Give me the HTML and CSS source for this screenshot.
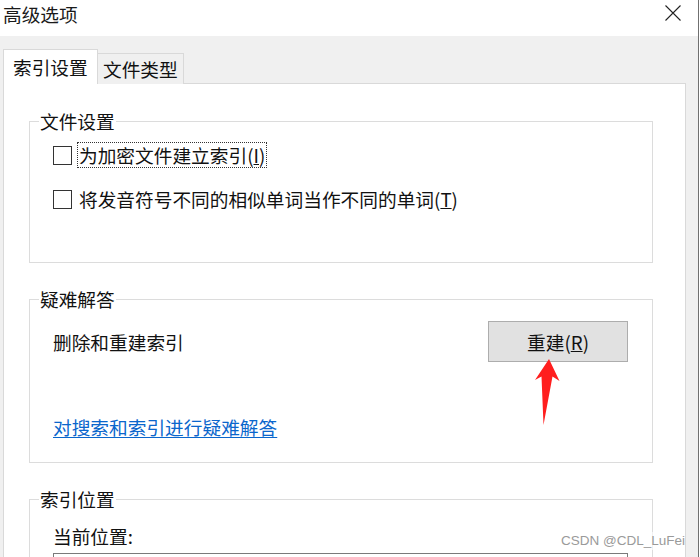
FILE: index.html
```html
<!DOCTYPE html>
<html lang="zh-CN">
<head>
<meta charset="utf-8">
<title>高级选项</title>
<link rel="stylesheet" href="styles.css">
</head>
<body>
<div class="window">
  <div class="titlebar">
    <div class="title">高级选项</div>
    <div class="close">
      <svg width="16" height="16" viewBox="0 0 16 16"><path d="M0.5 0.5 L15.5 15.5 M15.5 0.5 L0.5 15.5" stroke="#222" stroke-width="1.1" fill="none"/></svg>
    </div>
  </div>
  <div class="client">
    <div class="tabs">
      <div class="tab active">索引设置</div>
      <div class="tab">文件类型</div>
    </div>
    <div class="panel">
      <div class="group group-files">
        <span class="legend">文件设置</span>
        <div class="check-row first">
          <span class="checkbox"></span>
          <span class="check-label focused">为加密文件建立索引(<u>I</u>)</span>
        </div>
        <div class="check-row">
          <span class="checkbox"></span>
          <span class="check-label">将发音符号不同的相似单词当作不同的单词(<u>T</u>)</span>
        </div>
      </div>
      <div class="group group-trouble">
        <span class="legend">疑难解答</span>
        <div class="rebuild-row">
          <span class="text">删除和重建索引</span>
          <button class="btn">重建(<u>R</u>)</button>
        </div>
        <a class="link" href="#">对搜索和索引进行疑难解答</a>
        <svg class="arrow" width="40" height="80" viewBox="530 355 40 80"><polygon points="549,360 559.5,382 552.5,377.5 543.5,426 541.5,377.5 535,381" fill="#ff1e1e"/></svg>
      </div>
      <div class="group group-location">
        <span class="legend">索引位置</span>
        <div class="text">当前位置:</div>
        <div class="path-box"></div>
      </div>
    </div>
  </div>
  <div class="watermark">CSDN @CDL_LuFei</div>
</div>
</body>
</html>
```

FILE: styles.css
```css
* { box-sizing: border-box; }
html, body { margin: 0; padding: 0; background: #fff; }
body {
  font-family: "Noto Sans CJK SC", "Microsoft YaHei", sans-serif;
  font-size: 18.7px;
  color: #111;
  width: 700px;
  height: 557px;
  overflow: hidden;
}
.window {
  position: relative;
  width: 699px;
  height: 557px;
  border-right: 1px solid #707070;
  display: flex;
  flex-direction: column;
  overflow: hidden;
}
.titlebar {
  height: 36px;
  flex: none;
  display: flex;
  justify-content: space-between;
  align-items: flex-start;
  background: #fff;
}
.title {
  padding-left: 3px;
  line-height: 28px;
  color: #1a1a1a;
}
.close {
  margin: 5px 17px 0 0;
  width: 16px;
  height: 16px;
}
.close svg { display: block; }
.client {
  flex: 1;
  background: #f0f0f0;
  padding: 13px 12px 0 3px;
  display: flex;
  flex-direction: column;
}
.tabs {
  display: flex;
  align-items: flex-end;
  margin-bottom: -1px;
  position: relative;
  z-index: 1;
}
.tab {
  height: 31px;
  width: 87px;
  margin-left: -1px;
  border: 1px solid #d9d9d9;
  border-bottom: none;
  background: #f0f0f0;
  line-height: 29px;
  padding-left: 5px;
}
.tab.active {
  margin-left: 0;
  width: 95px;
  height: 35px;
  background: #fff;
  padding-left: 9px;
  line-height: 34px;
  position: relative;
  z-index: 2;
}
.panel {
  flex: 1;
  background: #fff;
  border: 1px solid #d9d9d9;
  padding: 37px 32px 0 25px;
}
.group {
  position: relative;
  border: 1px solid #dcdcdc;
  padding-left: 23px;
}
.legend {
  position: absolute;
  top: -13px;
  left: 9px;
  padding: 0 1px;
  background: #fff;
  line-height: 24px;
}
.group-files {
  height: 142px;
  padding-top: 20px;
}
.check-row {
  display: flex;
  align-items: center;
  height: 26px;
  margin-top: 18px;
}
.check-row.first { margin-top: 0; }
.checkbox {
  width: 19px;
  height: 19px;
  border: 1px solid #333;
  background: #fff;
  flex: none;
}
.check-label {
  margin-left: 5px;
  padding: 0 1px;
  line-height: 24px;
  border: 1px solid transparent;
}
.check-label.focused { border: 1px dotted #333; }
.group-trouble {
  margin-top: 36px;
  height: 164px;
  padding-top: 21px;
  padding-right: 24px;
}
.rebuild-row {
  display: flex;
  justify-content: space-between;
  align-items: center;
  height: 41px;
}
.text { line-height: 24px; }
.btn {
  width: 140px;
  height: 41px;
  background: #e1e1e1;
  border: 1px solid #adadad;
  font: inherit;
  color: #111;
  padding: 0;
  line-height: 24px;
}
.link {
  display: inline-block;
  margin-top: 53px;
  line-height: 24px;
  color: #0a66cc;
  text-decoration: underline;
  text-underline-offset: 2px;
}
.arrow {
  position: absolute;
  left: 500px;
  top: 54px;
}
.group-location {
  margin-top: 36px;
  height: 120px;
  padding-top: 24px;
  padding-right: 24px;
}
.path-box {
  margin-top: 5px;
  height: 40px;
  border: 1px solid #7a7a7a;
}
.watermark {
  position: absolute;
  left: 561px;
  top: 532px;
  font-family: "Liberation Sans", Arial, sans-serif;
  font-size: 13.5px;
  color: #9a9a9a;
  line-height: 18px;
  background: rgba(255,255,255,0.6);
}
```
